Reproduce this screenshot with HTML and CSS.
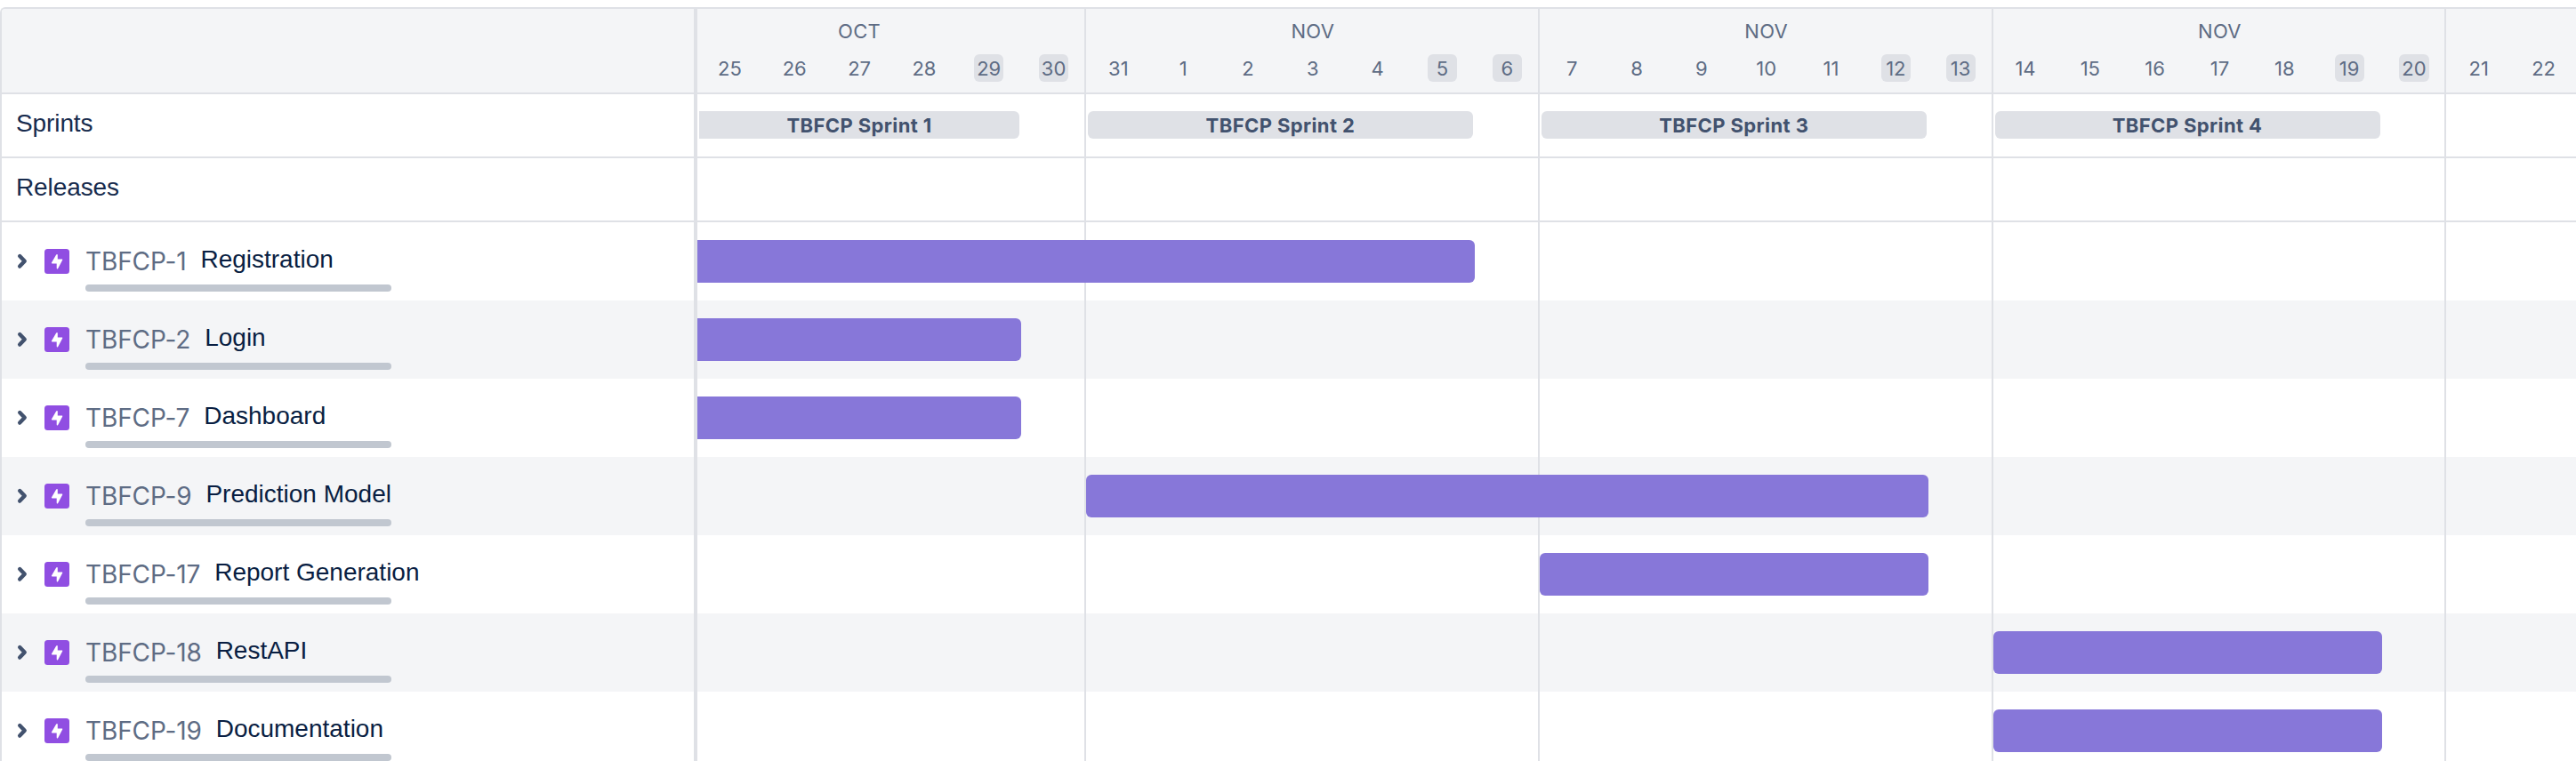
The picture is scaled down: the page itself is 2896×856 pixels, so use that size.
FILE: index.html
```
<!DOCTYPE html>
<html lang="en">
<head>
<meta charset="utf-8">
<title>Roadmap</title>
<link rel="stylesheet" href="styles.css">
</head>
<body>
<svg class="defs" aria-hidden="true">
  <symbol id="chevron" viewBox="0 0 14 20"><path d="M5.2 4 10.7 9.8 5.2 15.6" fill="none" stroke="#42526e" stroke-width="4.4" stroke-linecap="round" stroke-linejoin="round"/></symbol>
  <symbol id="epic" viewBox="0 0 28 28"><rect width="28" height="28" rx="3.5" fill="#904ee2"/><path d="M13.2 6.6 8.1 15.2c-.4.7-.1 1.2.6 1.2h5v5.2c0 1.1 1 1.2 1.5.3l4.9-9.1c.4-.7.1-1.2-.6-1.2h-4.7V6.9c0-1.2-1-1.2-1.5-.3z" fill="#fff"/></symbol>
</svg>
<main class="roadmap">
  <aside class="side">
    <div class="side-head"></div>
    <div class="side-label">Sprints</div>
    <div class="side-label">Releases</div>
    <div class="epic"><svg class="chevron"><use href="#chevron"/></svg><svg class="type"><use href="#epic"/></svg><div class="info"><div class="names"><span class="key">TBFCP-1</span><span class="title">Registration</span></div><div class="progress"></div></div></div>
    <div class="epic"><svg class="chevron"><use href="#chevron"/></svg><svg class="type"><use href="#epic"/></svg><div class="info"><div class="names"><span class="key">TBFCP-2</span><span class="title">Login</span></div><div class="progress"></div></div></div>
    <div class="epic"><svg class="chevron"><use href="#chevron"/></svg><svg class="type"><use href="#epic"/></svg><div class="info"><div class="names"><span class="key">TBFCP-7</span><span class="title">Dashboard</span></div><div class="progress"></div></div></div>
    <div class="epic"><svg class="chevron"><use href="#chevron"/></svg><svg class="type"><use href="#epic"/></svg><div class="info"><div class="names"><span class="key">TBFCP-9</span><span class="title">Prediction Model</span></div><div class="progress"></div></div></div>
    <div class="epic"><svg class="chevron"><use href="#chevron"/></svg><svg class="type"><use href="#epic"/></svg><div class="info"><div class="names"><span class="key">TBFCP-17</span><span class="title">Report Generation</span></div><div class="progress"></div></div></div>
    <div class="epic"><svg class="chevron"><use href="#chevron"/></svg><svg class="type"><use href="#epic"/></svg><div class="info"><div class="names"><span class="key">TBFCP-18</span><span class="title">RestAPI</span></div><div class="progress"></div></div></div>
    <div class="epic"><svg class="chevron"><use href="#chevron"/></svg><svg class="type"><use href="#epic"/></svg><div class="info"><div class="names"><span class="key">TBFCP-19</span><span class="title">Documentation</span></div><div class="progress"></div></div></div>
  </aside>
  <section class="timeline">
    <div class="canvas">
      <div class="head">
        <div class="week"><div class="month">OCT</div><div class="days"><span></span><span>25</span><span>26</span><span>27</span><span>28</span><span class="off">29</span><span class="off">30</span></div></div>
        <div class="week"><div class="month">NOV</div><div class="days"><span>31</span><span>1</span><span>2</span><span>3</span><span>4</span><span class="off">5</span><span class="off">6</span></div></div>
        <div class="week"><div class="month">NOV</div><div class="days"><span>7</span><span>8</span><span>9</span><span>10</span><span>11</span><span class="off">12</span><span class="off">13</span></div></div>
        <div class="week"><div class="month">NOV</div><div class="days"><span>14</span><span>15</span><span>16</span><span>17</span><span>18</span><span class="off">19</span><span class="off">20</span></div></div>
        <div class="week"><div class="month"></div><div class="days"><span>21</span><span>22</span></div></div>
      </div>
      <div class="lane sprints">
        <div class="sprint s1 cut">TBFCP Sprint 1</div>
        <div class="sprint s2">TBFCP Sprint 2</div>
        <div class="sprint s3">TBFCP Sprint 3</div>
        <div class="sprint s4">TBFCP Sprint 4</div>
      </div>
      <div class="lane releases"></div>
      <div class="row"><div class="bar registration cut"></div></div>
      <div class="row"><div class="bar s1 cut"></div></div>
      <div class="row"><div class="bar s1 cut"></div></div>
      <div class="row"><div class="bar prediction"></div></div>
      <div class="row"><div class="bar s3"></div></div>
      <div class="row"><div class="bar s4"></div></div>
      <div class="row"><div class="bar s4"></div></div>
      <div class="weeklines"><i></i><i></i><i></i><i></i></div>
    </div>
  </section>
</main>
</body>
</html>
```
FILE: styles.css
```
:root {
  --day: 72.83px;
  --week: 509.81px;
  --line: #dfe1e6;
  --stripe: #f4f5f7;
}
* { box-sizing: border-box; }
body { margin: 0; background: #fff; overflow: hidden; }
.defs { position: absolute; width: 0; height: 0; }

.roadmap {
  display: flex;
  height: 848px;
  margin-top: 8px;
  border-top: 2px solid var(--line);
  border-left: 2px solid var(--line);
  border-top-left-radius: 6px;
  overflow: hidden;
  font-family: Inter, "Liberation Sans", sans-serif;
}

/* Issue list */
.side {
  flex: none;
  width: 782px;
  border-right: 4px solid var(--line);
}
.side-head {
  height: 96px;
  background: var(--stripe);
  border-bottom: 2px solid var(--line);
}
.side-label {
  height: 72px;
  padding: 17px 0 0 16px;
  border-bottom: 2px solid var(--line);
  font: 28px/32px "Liberation Sans", Arial, sans-serif;
  letter-spacing: -0.1px;
  color: #172b4d;
}
.epic {
  display: flex;
  height: 88px;
  padding-left: 15px;
}
.epic:nth-child(odd), .row:nth-child(odd) { background: var(--stripe); }
.epic:nth-child(even), .row:nth-child(even) { background: #fff; }
.chevron { flex: none; width: 14px; height: 20px; margin-top: 34px; }
.type { flex: none; width: 28px; height: 28px; margin: 29.6px 18px 0 19px; }
.info { padding-top: 24px; }
.names { display: flex; height: 46px; white-space: nowrap; }
.key {
  padding-top: 4px;
  margin-right: 16px;
  font-size: 28px;
  line-height: 33px;
  letter-spacing: -0.12px;
  color: #5e6c84;
}
.title {
  padding-top: 2px;
  font: 28px/32px "Liberation Sans", Arial, sans-serif;
  color: #091e42;
}
.progress {
  width: 344px;
  height: 8px;
  border-radius: 4px;
  background: #c1c7d0;
}

/* Timeline */
.timeline { flex: 1; min-width: 0; overflow: hidden; }
.canvas {
  position: relative;
  width: calc(var(--week) * 5);
  margin-left: calc(var(--day) * -1);
}
.head {
  display: flex;
  height: 96px;
  background: var(--stripe);
  border-bottom: 2px solid var(--line);
  font-size: 22px;
  color: #5e6c84;
}
.week { width: var(--week); padding-top: 11px; }
.month { height: 40px; line-height: 28px; letter-spacing: 0.3px; text-align: center; }
.days { display: grid; grid-template-columns: repeat(7, var(--day)); justify-items: center; }
.days span {
  min-width: 33px;
  height: 31px;
  padding: 0 3px;
  border-radius: 6px;
  line-height: 33px;
  text-align: center;
}
.days .off { background: var(--line); }

.lane, .row { display: grid; grid-template-columns: repeat(35, var(--day)); }
.lane { height: 72px; border-bottom: 2px solid var(--line); }
.row { height: 88px; }
.sprint {
  grid-row: 1;
  height: 31px;
  margin: 19px 2px 0;
  border-radius: 6px;
  background: var(--line);
  font-size: 22px;
  font-weight: 700;
  line-height: 32px;
  letter-spacing: 0.4px;
  text-align: center;
  color: #42526e;
}
.bar {
  position: relative;
  z-index: 1;
  height: 48px;
  margin-top: 20px;
  border-radius: 6px;
  background: #8777d9;
}
.sprint.cut, .bar.cut { border-top-left-radius: 0; border-bottom-left-radius: 0; }
.s1 { grid-column: 2 / 7; }
.s2 { grid-column: 8 / 14; }
.s3 { grid-column: 15 / 21; }
.s4 { grid-column: 22 / 28; }
.registration { grid-column: 2 / 14; }
.prediction { grid-column: 8 / 21; }

/* Week separators drawn over the row stripes, under the bars */
.weeklines {
  position: absolute;
  inset: 0;
  display: flex;
}
.weeklines i { width: var(--week); border-right: 2px solid var(--line); }
```
